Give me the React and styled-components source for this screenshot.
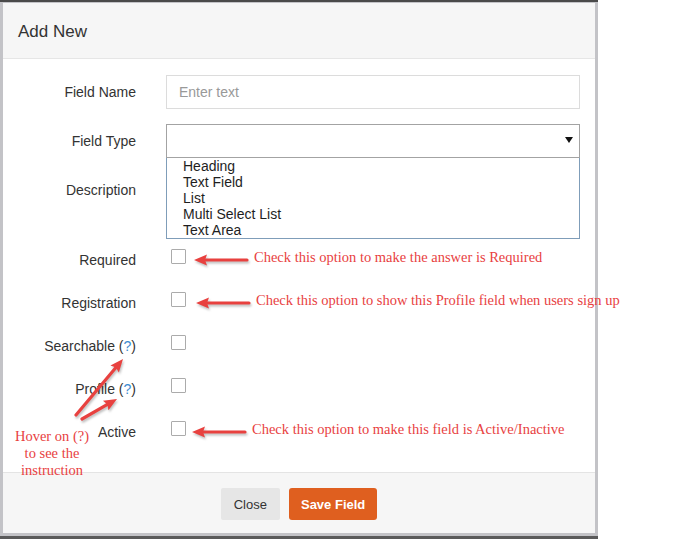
import React from 'react'
import styled, { createGlobalStyle } from 'styled-components'

const GlobalStyle = createGlobalStyle`
  html, body {
    margin: 0;
    padding: 0;
    background: #fff;
  }
  body {
    font-family: "Liberation Sans", Arial, sans-serif;
    color: #333;
  }
`

const RED = '#e8413f'

// red annotation arrow from tail (x1,y1) to tip (x2,y2)
const Arrow = ({ x1, y1, x2, y2 }) => {
    const dx = x2 - x1
    const dy = y2 - y1
    const len = Math.sqrt(dx * dx + dy * dy)
    const ux = dx / len
    const uy = dy / len
    const bx = x2 - ux * 13
    const by = y2 - uy * 13
    const nx = -uy
    const ny = ux
    const head = `${x2},${y2} ${bx + nx * 5.5},${by + ny * 5.5} ${bx + ux * 2},${by + uy * 2} ${bx - nx * 5.5},${by - ny * 5.5}`
    return (
        <g>
            <line x1={x1} y1={y1} x2={bx + ux * 2} y2={by + uy * 2} stroke={RED} strokeWidth="3.2" strokeLinecap="round" />
            <polygon points={head} fill={RED} />
        </g>
    )
}

const fields = ['Heading', 'Text Field', 'List', 'Multi Select List', 'Text Area']

const checks = [
    { label: 'Required', note: 'Check this option to make the answer is Required' },
    { label: 'Registration', note: 'Check this option to show this Profile field when users sign up', shift: 2 },
    { label: 'Searchable', help: true },
    { label: 'Profile', help: true },
    { label: 'Active', note: 'Check this option to make this field is Active/Inactive', shift: -2 },
]

const App = () => {
    return (
        <>
            <GlobalStyle />
            <Screen>
                <Dialog>
                    <Header>
                        <Title>Add New</Title>
                    </Header>
                    <Body>
                        <FormRow>
                            <Label>Field Name</Label>
                            <TextInput type="text" placeholder="Enter text" />
                        </FormRow>
                        <FormRow>
                            <Label>Field Type</Label>
                            <SelectWrap>
                                <SelectBox>
                                    <svg width="8" height="6" viewBox="0 0 8 6">
                                        <polygon points="0,0 8,0 4,6" fill="#111" />
                                    </svg>
                                </SelectBox>
                                <OptionList>
                                    {fields.map((f) => (
                                        <OptionItem key={f}>{f}</OptionItem>
                                    ))}
                                </OptionList>
                            </SelectWrap>
                        </FormRow>
                        <FormRow>
                            <Label>Description</Label>
                            <TextArea />
                        </FormRow>
                        {checks.map((c) => (
                            <FormRow key={c.label}>
                                <Label>
                                    {c.label}
                                    {c.help && (
                                        <>
                                            {' ('}
                                            <Help>?</Help>
                                            {')'}
                                        </>
                                    )}
                                </Label>
                                <CheckCell>
                                    <Check type="checkbox" />
                                    {c.note && (
                                        <>
                                            <PointerSvg width="56" height="16" viewBox="0 0 56 16" $shift={c.shift || 0}>
                                                <Arrow x1={54} y1={8} x2={1} y2={8} />
                                            </PointerSvg>
                                            <Note>{c.note}</Note>
                                        </>
                                    )}
                                </CheckCell>
                            </FormRow>
                        ))}

                        <HoverNote>
                            Hover on (?)
                            <br />
                            to see the
                            <br />
                            instruction
                        </HoverNote>
                        <HoverArrows width="73" height="134" viewBox="60 350 73 134">
                            <Arrow x1={76} y1={415} x2={123} y2={359} />
                            <Arrow x1={82} y1={419} x2={117} y2={399} />
                        </HoverArrows>
                    </Body>
                    <Footer>
                        <CloseButton>Close</CloseButton>
                        <SaveButton>Save Field</SaveButton>
                    </Footer>
                </Dialog>
            </Screen>
        </>
    )
}

export default App

const Screen = styled.div`
    width: 598px;
    height: 539px;
    box-sizing: border-box;
    border-top: 2px solid #4a4a4a;
    border-bottom: 3px solid #5a5a5a;
    background: #c3c3c7;
    padding: 1px 3px 3px 3px;
    display: flex;
    flex-direction: column;
`
const Dialog = styled.div`
    flex: 1;
    display: flex;
    flex-direction: column;
    background: #fff;
`
const Header = styled.div`
    height: 56px;
    box-sizing: border-box;
    background: #f6f6f6;
    border-bottom: 1px solid #e6e6e6;
    display: flex;
    align-items: center;
    padding: 3px 15px 0;
`
const Title = styled.h4`
    margin: 0;
    font-size: 17px;
    font-weight: 400;
    color: #333;
`
const Body = styled.div`
    flex: 1;
    position: relative;
    padding: 16px 15px 0;
`
const FormRow = styled.div`
    display: grid;
    grid-template-columns: 118px 414px;
    column-gap: 30px;
    margin-bottom: 15px;
`
const Label = styled.label`
    text-align: right;
    padding-top: 7px;
    line-height: 20px;
    font-size: 14px;
    color: #333;
    white-space: nowrap;
`
const Help = styled.span`
    color: #3d8bd0;
`
const TextInput = styled.input`
    height: 34px;
    box-sizing: border-box;
    border: 1px solid #dcdcdc;
    padding: 6px 12px;
    font-family: "Liberation Sans", Arial, sans-serif;
    font-size: 14px;
    color: #555;
    outline: none;
    &::placeholder {
        color: #999;
    }
`
const SelectWrap = styled.div`
    position: relative;
`
const SelectBox = styled.div`
    height: 34px;
    box-sizing: border-box;
    border: 1px solid #a3a3a3;
    background: #fff;
    display: flex;
    align-items: center;
    justify-content: flex-end;
    padding: 0 6px 2px 0;
`
const OptionList = styled.ul`
    position: absolute;
    top: 34px;
    left: 0;
    right: 0;
    margin: 0;
    padding: 0 0 0 16px;
    list-style: none;
    background: #fff;
    border: 1px solid #7f9db9;
    border-top: none;
    z-index: 2;
`
const OptionItem = styled.li`
    font-size: 14px;
    line-height: 16px;
    color: #1e1e1e;
`
const TextArea = styled.textarea`
    height: 55px;
    box-sizing: border-box;
    border: 1px solid #dcdcdc;
    resize: none;
`
const CheckCell = styled.div`
    display: flex;
    align-items: flex-start;
    height: 28px;
    padding: 6px 0 0 5px;
    box-sizing: border-box;
`
const Check = styled.input`
    appearance: none;
    margin: 0;
    width: 15px;
    height: 15px;
    box-sizing: border-box;
    border: 1px solid #ababab;
    border-radius: 1px;
    background: #fff;
    flex: none;
`
const PointerSvg = styled.svg`
    flex: none;
    margin: 3px 0 0 ${(p) => 7 + p.$shift}px;
    overflow: visible;
    filter: drop-shadow(1px 2px 1px rgba(0, 0, 0, 0.25));
`
const Note = styled.span`
    margin: -2px 0 0 5px;
    font-family: "Liberation Serif", "Times New Roman", serif;
    font-size: 14.5px;
    line-height: 20px;
    color: ${RED};
    white-space: nowrap;
`
const HoverNote = styled.div`
    position: absolute;
    left: 1px;
    top: 369px;
    width: 96px;
    text-align: center;
    font-family: "Liberation Serif", "Times New Roman", serif;
    font-size: 14.5px;
    line-height: 17px;
    color: ${RED};
`
const HoverArrows = styled.svg`
    position: absolute;
    left: 57px;
    top: 291px;
    overflow: visible;
    filter: drop-shadow(1px 2px 1px rgba(0, 0, 0, 0.25));
`
const Footer = styled.div`
    height: 61px;
    box-sizing: border-box;
    background: #f6f6f6;
    border-top: 1px solid #e4e4e4;
    display: flex;
    justify-content: center;
    align-items: flex-start;
    gap: 9px;
    padding-top: 15px;
`
const CloseButton = styled.button`
    height: 32px;
    padding: 0 13px;
    border: none;
    border-radius: 2px;
    background: #e6e6e6;
    color: #333;
    font-family: "Liberation Sans", Arial, sans-serif;
    font-size: 13px;
`
const SaveButton = styled.button`
    height: 32px;
    padding: 0 12px;
    border: none;
    border-radius: 3px;
    background: #df5f1f;
    color: #fff;
    font-family: "Liberation Sans", Arial, sans-serif;
    font-size: 13px;
    font-weight: 700;
`
